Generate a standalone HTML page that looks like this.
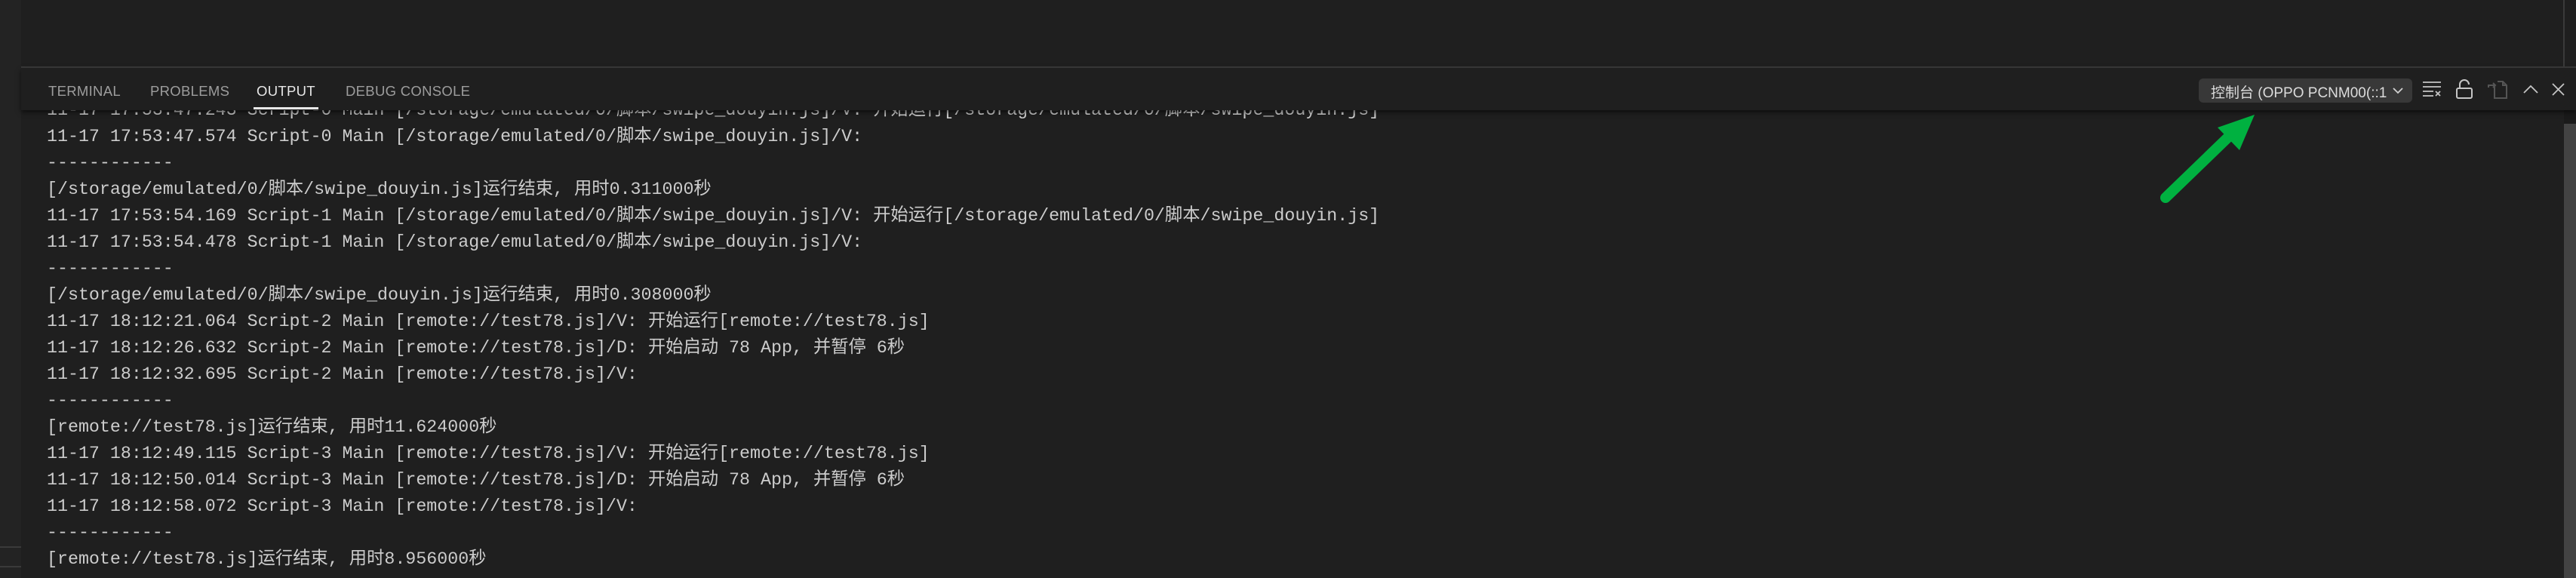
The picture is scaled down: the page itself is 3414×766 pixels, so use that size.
<!DOCTYPE html>
<html><head><meta charset="utf-8"><style>
html,body{margin:0;padding:0;}
body{width:3414px;height:766px;background:#1f1f1f;position:relative;overflow:hidden;font-family:"Liberation Sans","Noto Sans CJK SC",sans-serif;}
.strip{position:absolute;left:0;top:0;width:28px;height:766px;background:#232323;}
.strip .l{position:absolute;left:0;width:28px;height:2px;background:#3a3a3a;}
.top{position:absolute;left:28px;top:0;right:0;height:88px;background:#1f1f1f;border-bottom:2px solid #3a3a3a;}
.vl{position:absolute;left:3397px;top:0;width:2px;height:88px;background:#3a3a3a;}
.hdr{position:absolute;left:28px;top:90px;right:0;height:56px;background:#1f1f1f;box-shadow:0 3px 6px rgba(0,0,0,.55);z-index:2;}
.tab{position:absolute;top:20px;font-size:18.5px;color:#9d9d9d;letter-spacing:.3px;}
.tab.act{color:#e7e7e7;}
.ul{position:absolute;left:308px;top:52px;width:86px;height:3px;background:#e7e7e7;}
.out{position:absolute;left:62px;top:129px;font-family:"Liberation Mono","Noto Sans CJK SC",monospace;font-size:23.3px;line-height:35px;color:#cccccc;white-space:pre;z-index:1;}
.sb{position:absolute;left:3398px;top:164px;width:16px;height:602px;background:#434343;}
.sbt{position:absolute;left:3398px;top:146px;width:16px;height:18px;background:#1a1a1a;}
.dd{position:absolute;left:2914px;top:104px;width:283px;height:32px;background:#383838;border-radius:6px;z-index:3;}
.dd span{position:absolute;left:16px;top:4px;font-size:19px;color:#dcdcdc;white-space:nowrap;}
svg.ic{position:absolute;z-index:3;}
</style></head><body>
<div class="strip"><div class="l" style="top:724px"></div><div class="l" style="top:750px"></div></div>
<div class="top"></div><div class="vl"></div>
<div class="hdr">
<div class="tab" style="left:36px">TERMINAL</div>
<div class="tab" style="left:171px">PROBLEMS</div>
<div class="tab act" style="left:312px">OUTPUT</div>
<div class="tab" style="left:430px">DEBUG CONSOLE</div>
<div class="ul"></div>
</div>
<div class="dd"><span>控制台 (OPPO PCNM00(::1</span>
<svg style="position:absolute;left:256px;top:10px" width="16" height="12" viewBox="0 0 16 12"><path d="M2 3l6 6 6-6" fill="none" stroke="#d0d0d0" stroke-width="1.8"/></svg></div>
<svg class="ic" style="left:3210px;top:106px" width="28" height="24" viewBox="0 0 28 24"><path d="M1 3h24M1 9h24M1 15h14M1 21h14" stroke="#c5c5c5" stroke-width="1.8"/><path d="M18 15l6 6M24 15l-6 6" stroke="#c5c5c5" stroke-width="1.8"/></svg>
<svg class="ic" style="left:3254px;top:105px" width="24" height="27" viewBox="0 0 24 27"><rect x="2" y="12" width="20" height="13" rx="2" fill="none" stroke="#c5c5c5" stroke-width="2"/><path d="M6 12V7a6 6 0 0 1 12 0" fill="none" stroke="#c5c5c5" stroke-width="2"/></svg>
<svg class="ic" style="left:3297px;top:105px" width="28" height="27" viewBox="0 0 28 27"><path d="M9 9v16h16V8l-5-5H13" fill="none" stroke="#555" stroke-width="2"/><path d="M20 3v5h5" fill="none" stroke="#555" stroke-width="2"/><path d="M1 11v-3h9M7 5l3 3-3 3" fill="none" stroke="#555" stroke-width="2"/></svg>
<svg class="ic" style="left:3343px;top:110px" width="22" height="16" viewBox="0 0 22 16"><path d="M2 13l9-9 9 9" fill="none" stroke="#c5c5c5" stroke-width="1.8"/></svg>
<svg class="ic" style="left:3381px;top:109px" width="19" height="19" viewBox="0 0 19 19"><path d="M2 2l15 15M17 2L2 17" stroke="#c5c5c5" stroke-width="1.8"/></svg>
<div class="sbt"></div><div class="sb"></div>
<svg class="ic" style="left:0;top:0" width="3414" height="766" viewBox="0 0 3414 766"><path d="M2870 262L2957 178" stroke="#00b140" stroke-width="14" stroke-linecap="round"/><path d="M2988 152L2939 169L2968 199Z" fill="#00b140"/></svg>
<div class="out">11-17 17:53:47.243 Script-0 Main [/storage/emulated/0/脚本/swipe_douyin.js]/V: 开始运行[/storage/emulated/0/脚本/swipe_douyin.js]
11-17 17:53:47.574 Script-0 Main [/storage/emulated/0/脚本/swipe_douyin.js]/V:
------------
[/storage/emulated/0/脚本/swipe_douyin.js]运行结束, 用时0.311000秒
11-17 17:53:54.169 Script-1 Main [/storage/emulated/0/脚本/swipe_douyin.js]/V: 开始运行[/storage/emulated/0/脚本/swipe_douyin.js]
11-17 17:53:54.478 Script-1 Main [/storage/emulated/0/脚本/swipe_douyin.js]/V:
------------
[/storage/emulated/0/脚本/swipe_douyin.js]运行结束, 用时0.308000秒
11-17 18:12:21.064 Script-2 Main [remote://test78.js]/V: 开始运行[remote://test78.js]
11-17 18:12:26.632 Script-2 Main [remote://test78.js]/D: 开始启动 78 App, 并暂停 6秒
11-17 18:12:32.695 Script-2 Main [remote://test78.js]/V:
------------
[remote://test78.js]运行结束, 用时11.624000秒
11-17 18:12:49.115 Script-3 Main [remote://test78.js]/V: 开始运行[remote://test78.js]
11-17 18:12:50.014 Script-3 Main [remote://test78.js]/D: 开始启动 78 App, 并暂停 6秒
11-17 18:12:58.072 Script-3 Main [remote://test78.js]/V:
------------
[remote://test78.js]运行结束, 用时8.956000秒</div>
</body></html>
